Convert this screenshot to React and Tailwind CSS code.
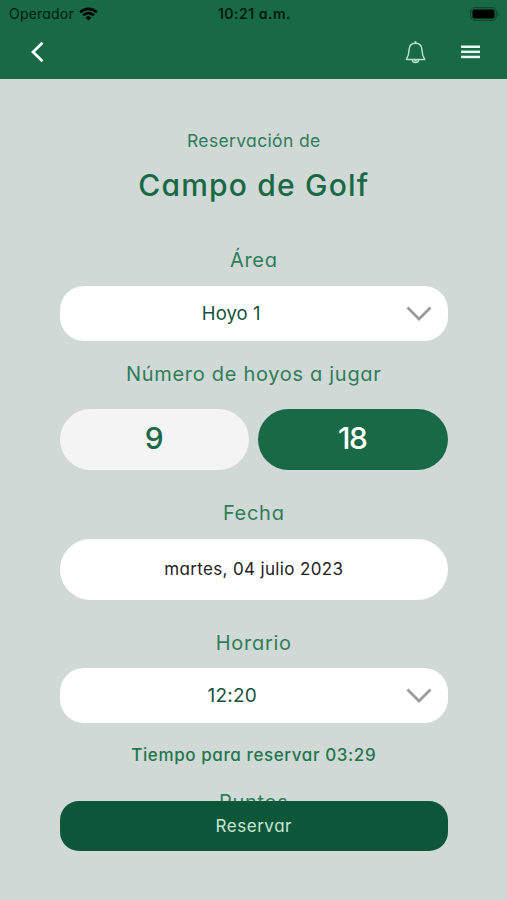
import { useState } from 'react';

function StatusBar() {
  return (
    <div className="grid grid-cols-3 h-[27px] pl-[9px] pr-[7px] items-center text-[#041a10]">
      <div className="flex items-center gap-[5px]">
        <span className="text-[14px] leading-none tracking-[0.2px]">Operador</span>
        <svg width="19" height="14" viewBox="0 0 19 14" fill="none" stroke="#000" strokeWidth="2.7">
          <path d="M1.2 5.2a11.8 11.8 0 0 1 16.6 0" />
          <path d="M4.2 8.4a7.5 7.5 0 0 1 10.6 0" />
          <path d="M9.5 13.6L6.6 10.7a4.1 4.1 0 0 1 5.8 0z" fill="#000" stroke="none" />
        </svg>
      </div>
      <span className="text-center text-[14px] leading-none font-semibold tracking-[0.5px] whitespace-nowrap">10:21 a.m.</span>
      <svg className="justify-self-end" width="30" height="14" viewBox="0 0 30 14">
        <rect x="0.7" y="0.7" width="25.6" height="12.6" rx="4" fill="none" stroke="#0e492e" strokeWidth="1.3" />
        <rect x="2.5" y="2.5" width="22" height="9" rx="1.8" fill="#000" />
        <path d="M27.5 5v4c1.500-.4 1.500-3.600 0-4z" fill="#0e492e" />
      </svg>
    </div>
  );
}

function Header() {
  return (
    <header className="h-[79px] bg-[#176a45]">
      <StatusBar />
      <div className="flex items-center h-[50px] pl-[30px] pr-[27px]">
        <button className="mr-auto">
          <svg width="15" height="22" viewBox="0 0 15 22" fill="none" stroke="#fff" strokeWidth="2.7">
            <path d="M12.5 1.8L3 11l9.5 9.2" />
          </svg>
        </button>
        <button className="mr-[35px]">
          <svg width="21" height="24" viewBox="0 0 21 24" fill="none" stroke="#b5dfc9" strokeWidth="1.5" strokeLinejoin="round">
            <path d="M10.5 3.2C6.300 3.200 4.200 5.800 4.100 9.500c-.1 4.200-.6 6.700-2.800 9.900h18.400c-2.200-3.200-2.700-5.700-2.800-9.900-.1-3.700-2.200-6.300-6.400-6.300z" />
            <path d="M10.5 1v2" strokeWidth="1.8" />
            <path d="M7.3 19.600c.4 3.800 6 3.800 6.400 0M9.300 20.500h2.400" />
          </svg>
        </button>
        <button>
          <svg width="19" height="14" viewBox="0 0 19 14" fill="#e8fff3">
            <rect y="0.5" width="19" height="2.5" />
            <rect y="5.6" width="19" height="2.5" />
            <rect y="10.7" width="19" height="2.5" />
          </svg>
        </button>
      </div>
    </header>
  );
}

function Label({ children }) {
  return <h2 className="text-center text-[20px] leading-6 tracking-[0.7px] text-[#2f7d59]">{children}</h2>;
}

function Select({ value, textStyle }) {
  return (
    <button className="grid grid-cols-[1fr_auto] items-center w-full h-[55px] rounded-[24px] bg-white pr-[16px]">
      <span className={textStyle}>{value}</span>
      <svg width="27" height="16" viewBox="0 0 27 16" fill="none" stroke="#9b9b9b" strokeWidth="2.8">
        <path d="M2.5 1.5L14 13 25.5 1.5" />
      </svg>
    </button>
  );
}

function App() {
  const [holes, setHoles] = useState(18);

  return (
    <div className="relative h-[900px] overflow-hidden bg-[#d0d9d5] font-[Inter,'Liberation_Sans',sans-serif] [font-feature-settings:'cv11']">
      <Header />

      <main className="pl-[59.5px] pr-[59px] pt-[50px]">
        <p className="text-center text-[17.5px] leading-6 tracking-[0.35px] text-[#2f7d59]">Reservación de</p>
        <h1 className="mt-3 text-center text-[30px] leading-10 font-medium tracking-[1.2px] text-[#176a45]">Campo de Golf</h1>

        <div className="mt-[43px]">
          <Label>Área</Label>
        </div>
        <div className="mt-[14px]">
          <Select value="Hoyo 1" textStyle="pr-0.5 pb-0.5 text-[18.5px] leading-6 tracking-[0.1px] text-[#14523a]" />
        </div>

        <div className="mt-[21px]">
          <Label>Número de hoyos a jugar</Label>
        </div>
        <div className="mt-[23px] grid grid-cols-2 gap-[9px]">
          {/* 9 or 18 holes */}
          {[9, 18].map((n) => (
            <button
              key={n}
              onClick={() => setHoles(n)}
              className={`h-[61px] rounded-full pr-0.5 pb-[3px] text-[30px] leading-none font-medium tracking-[-1.5px] ${holes === n ? 'bg-[#176a45] text-white' : 'bg-[#f4f4f4] text-[#176a45]'}`}
            >
              {n}
            </button>
          ))}
        </div>

        <div className="mt-[31px]">
          <Label>Fecha</Label>
        </div>
        <button className="mt-[14px] block w-full h-[61px] rounded-full bg-white text-[17px] tracking-[0.35px] text-[#222]">martes, 04 julio 2023</button>

        <div className="mt-[31px]">
          <Label>Horario</Label>
        </div>
        <div className="mt-[13px]">
          <Select value="12:20" textStyle="text-[19px] leading-6 tracking-[0.2px] text-[#14523a]" />
        </div>

        <p className="mt-5 text-center text-[17px] leading-6 font-medium tracking-[0.6px] text-[#22764f]">Tiempo para reservar 03:29</p>
        <div className="mt-[23px]">
          <Label>Puntos</Label>
        </div>
      </main>

      <button className="absolute bottom-[49px] left-[59.5px] right-[59px] h-[50px] rounded-[19px] bg-[#0c5739] pt-0.5 text-[17px] tracking-[0.55px] text-[#c9e6d7]">Reservar</button>
    </div>
  );
}

export default App;
